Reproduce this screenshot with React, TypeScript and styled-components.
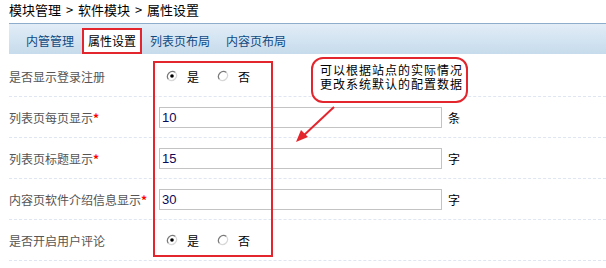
import styled, { createGlobalStyle } from 'styled-components';

const GlobalStyle = createGlobalStyle`
  body {
    margin: 0;
    background: #fff;
    font-family: "Noto Sans CJK SC", "Liberation Sans", sans-serif;
    font-size: 12px;
  }
`;

const Page = styled.div`
  position: relative;
  width: 606px;
  height: 268px;
  overflow: hidden;
`;

const Breadcrumb = styled.div`
  height: 23px;
  padding-left: 9px;
  font-size: 13px;
  line-height: 20px;
  color: #000;
  word-spacing: 2px;
`;

const TabBar = styled.div`
  margin-left: 9px;
  height: 30px;
  padding-left: 9px;
  display: flex;
  align-items: flex-end;
  border-top: 1px solid #8eaccb;
  background: linear-gradient(#e2edf7, #c6dbec);
`;

const Tab = styled.div<{ $active?: boolean }>`
  height: ${(p) => (p.$active ? '22px' : '26px')};
  padding: 0 ${(p) => (p.$active ? '4px' : '8px')};
  line-height: ${(p) => (p.$active ? '22px' : '26px')};
  color: ${(p) => (p.$active ? '#000' : '#114a82')};
  background: ${(p) => (p.$active ? '#fff' : 'transparent')};
  border: ${(p) => (p.$active ? '2px solid #e3262e' : 'none')};
  white-space: nowrap;
`;

const Form = styled.div`
  padding-top: 2px;
  padding-left: 9px;
`;

const Row = styled.div`
  height: 40px;
  display: flex;
  align-items: center;
  border-bottom: 1px dashed #dfe6f1;
`;

const Label = styled.div`
  width: 150px;
  color: #555;
  white-space: nowrap;
`;

const Star = styled.span`
  color: #f00;
  font-weight: bold;
`;

const Input = styled.div`
  box-sizing: border-box;
  width: 283px;
  height: 21px;
  border: 1px solid #c3c3c3;
  padding-left: 2px;
  line-height: 19px;
  color: #0a0a5a;
  font-family: "Liberation Sans", sans-serif;
  font-size: 13px;
`;

const Unit = styled.span`
  margin-left: 6px;
  color: #000;
`;

const RadioGroup = styled.div`
  display: flex;
  align-items: center;
  padding-left: 7px;
`;

const RadioItem = styled.label`
  display: flex;
  align-items: center;
  gap: 9px;
  margin-right: 18px;
  color: #000;
`;

const RadioDot = ({ checked }: { checked?: boolean }) => (
  <svg width="12" height="12" viewBox="0 0 12 12">
    <circle cx="6" cy="6" r="5" fill="#fff" />
    <path d="M2.5 9.5 A5 5 0 0 1 9.5 2.5" stroke="#7a7a7a" strokeWidth="1.2" fill="none" />
    <path d="M9.5 2.5 A5 5 0 0 1 2.5 9.5" stroke="#d8d8d8" strokeWidth="1.2" fill="none" />
    {checked && <circle cx="6" cy="6" r="1.8" fill="#000" />}
  </svg>
);

const Radios = () => (
  <RadioGroup>
    <RadioItem>
      <RadioDot checked />是
    </RadioItem>
    <RadioItem>
      <RadioDot />否
    </RadioItem>
  </RadioGroup>
);

const HighlightBox = styled.div`
  position: absolute;
  left: 153px;
  top: 61px;
  width: 116px;
  height: 192px;
  border: 2px solid #e3262e;
  pointer-events: none;
`;

const Callout = styled.div`
  position: absolute;
  left: 311px;
  top: 57px;
  box-sizing: border-box;
  width: 157px;
  height: 46px;
  border: 2px solid #e3262e;
  border-radius: 12px;
  background: #fff;
  padding: 4px 0 0 7px;
  font-size: 12px;
  letter-spacing: 1px;
  line-height: 14px;
  color: #000;
`;

const CalloutLine = styled.div`
  white-space: nowrap;
  height: 14px;
`;

const Arrow = styled.svg`
  position: absolute;
  left: 290px;
  top: 100px;
`;

export default function App() {
  return (
    <Page>
      <GlobalStyle />
      <Breadcrumb>模块管理 &gt; 软件模块 &gt; 属性设置</Breadcrumb>
      <TabBar>
        <Tab>内管管理</Tab>
        <Tab $active>属性设置</Tab>
        <Tab>列表页布局</Tab>
        <Tab>内容页布局</Tab>
      </TabBar>
      <Form>
        <Row>
          <Label>是否显示登录注册</Label>
          <Radios />
        </Row>
        <Row>
          <Label>
            列表页每页显示<Star>*</Star>
          </Label>
          <Input>10</Input>
          <Unit>条</Unit>
        </Row>
        <Row>
          <Label>
            列表页标题显示<Star>*</Star>
          </Label>
          <Input>15</Input>
          <Unit>字</Unit>
        </Row>
        <Row>
          <Label>
            内容页软件介绍信息显示<Star>*</Star>
          </Label>
          <Input>30</Input>
          <Unit>字</Unit>
        </Row>
        <Row>
          <Label>是否开启用户评论</Label>
          <Radios />
        </Row>
      </Form>
      <HighlightBox />
      <Callout>
        <CalloutLine>可以根据站点的实际情况</CalloutLine>
        <CalloutLine>更改系统默认的配置数据</CalloutLine>
      </Callout>
      <Arrow width="50" height="50" viewBox="0 0 50 50">
        <line x1="44" y1="7" x2="12" y2="37" stroke="#e3262e" strokeWidth="2" />
        <polygon points="6,42 11,30 18,37" fill="#e3262e" />
      </Arrow>
    </Page>
  );
}
